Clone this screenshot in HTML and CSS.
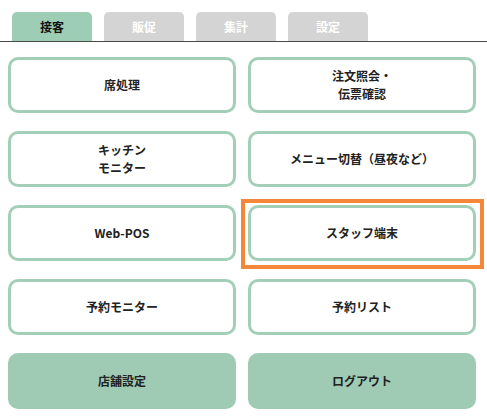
FILE: index.html
```html
<!DOCTYPE html>
<html lang="ja">
<head>
<meta charset="utf-8">
<link rel="stylesheet" href="styles.css">
</head>
<body>
<div class="tabs">
  <div class="tab active">接客</div>
  <div class="tab">販促</div>
  <div class="tab">集計</div>
  <div class="tab">設定</div>
</div>
<div class="grid">
  <div class="btn">席処理</div>
  <div class="btn">注文照会・<br>伝票確認</div>
  <div class="btn">キッチン<br>モニター</div>
  <div class="btn">メニュー切替（昼夜など）</div>
  <div class="btn">Web-POS</div>
  <div class="btn selected">スタッフ端末</div>
  <div class="btn">予約モニター</div>
  <div class="btn">予約リスト</div>
  <div class="btn filled">店舗設定</div>
  <div class="btn filled">ログアウト</div>
</div>
</body>
</html>
```
FILE: styles.css
```css
* { box-sizing: border-box; }
html, body { margin: 0; padding: 0; background: #fff; }
body {
  font-family: "Noto Sans CJK JP", "Noto Sans", sans-serif;
  font-size: 12px;
  font-weight: bold;
  color: #222;
  width: 487px;
  height: 420px;
  overflow: hidden;
}
.tabs {
  display: flex;
  gap: 12px;
  padding: 12px 0 0 12px;
  border-bottom: 1px solid #4a4a4a;
}
.tab {
  width: 80px;
  height: 29px;
  border-radius: 5px 5px 0 0;
  background: #d4d4d4;
  color: #fff;
  display: flex;
  align-items: center;
  justify-content: center;
}
.tab.active {
  background: #9ecdb5;
  color: #111;
}
.grid {
  display: grid;
  grid-template-columns: 228px 228px;
  grid-auto-rows: 56px;
  column-gap: 12px;
  row-gap: 18px;
  padding: 15px 0 0 8px;
}
.btn {
  position: relative;
  border: 3px solid #a3cfb8;
  border-radius: 10px;
  background: #fff;
  display: flex;
  align-items: center;
  justify-content: center;
  text-align: center;
  line-height: 18px;
}
.btn.selected::after {
  content: "";
  position: absolute;
  left: -10px;
  top: -9px;
  right: -11px;
  bottom: -11px;
  border: 4px solid #f5873b;
}
.btn.filled {
  background: #9fcbb5;
  border-color: #9fcbb5;
}
```
